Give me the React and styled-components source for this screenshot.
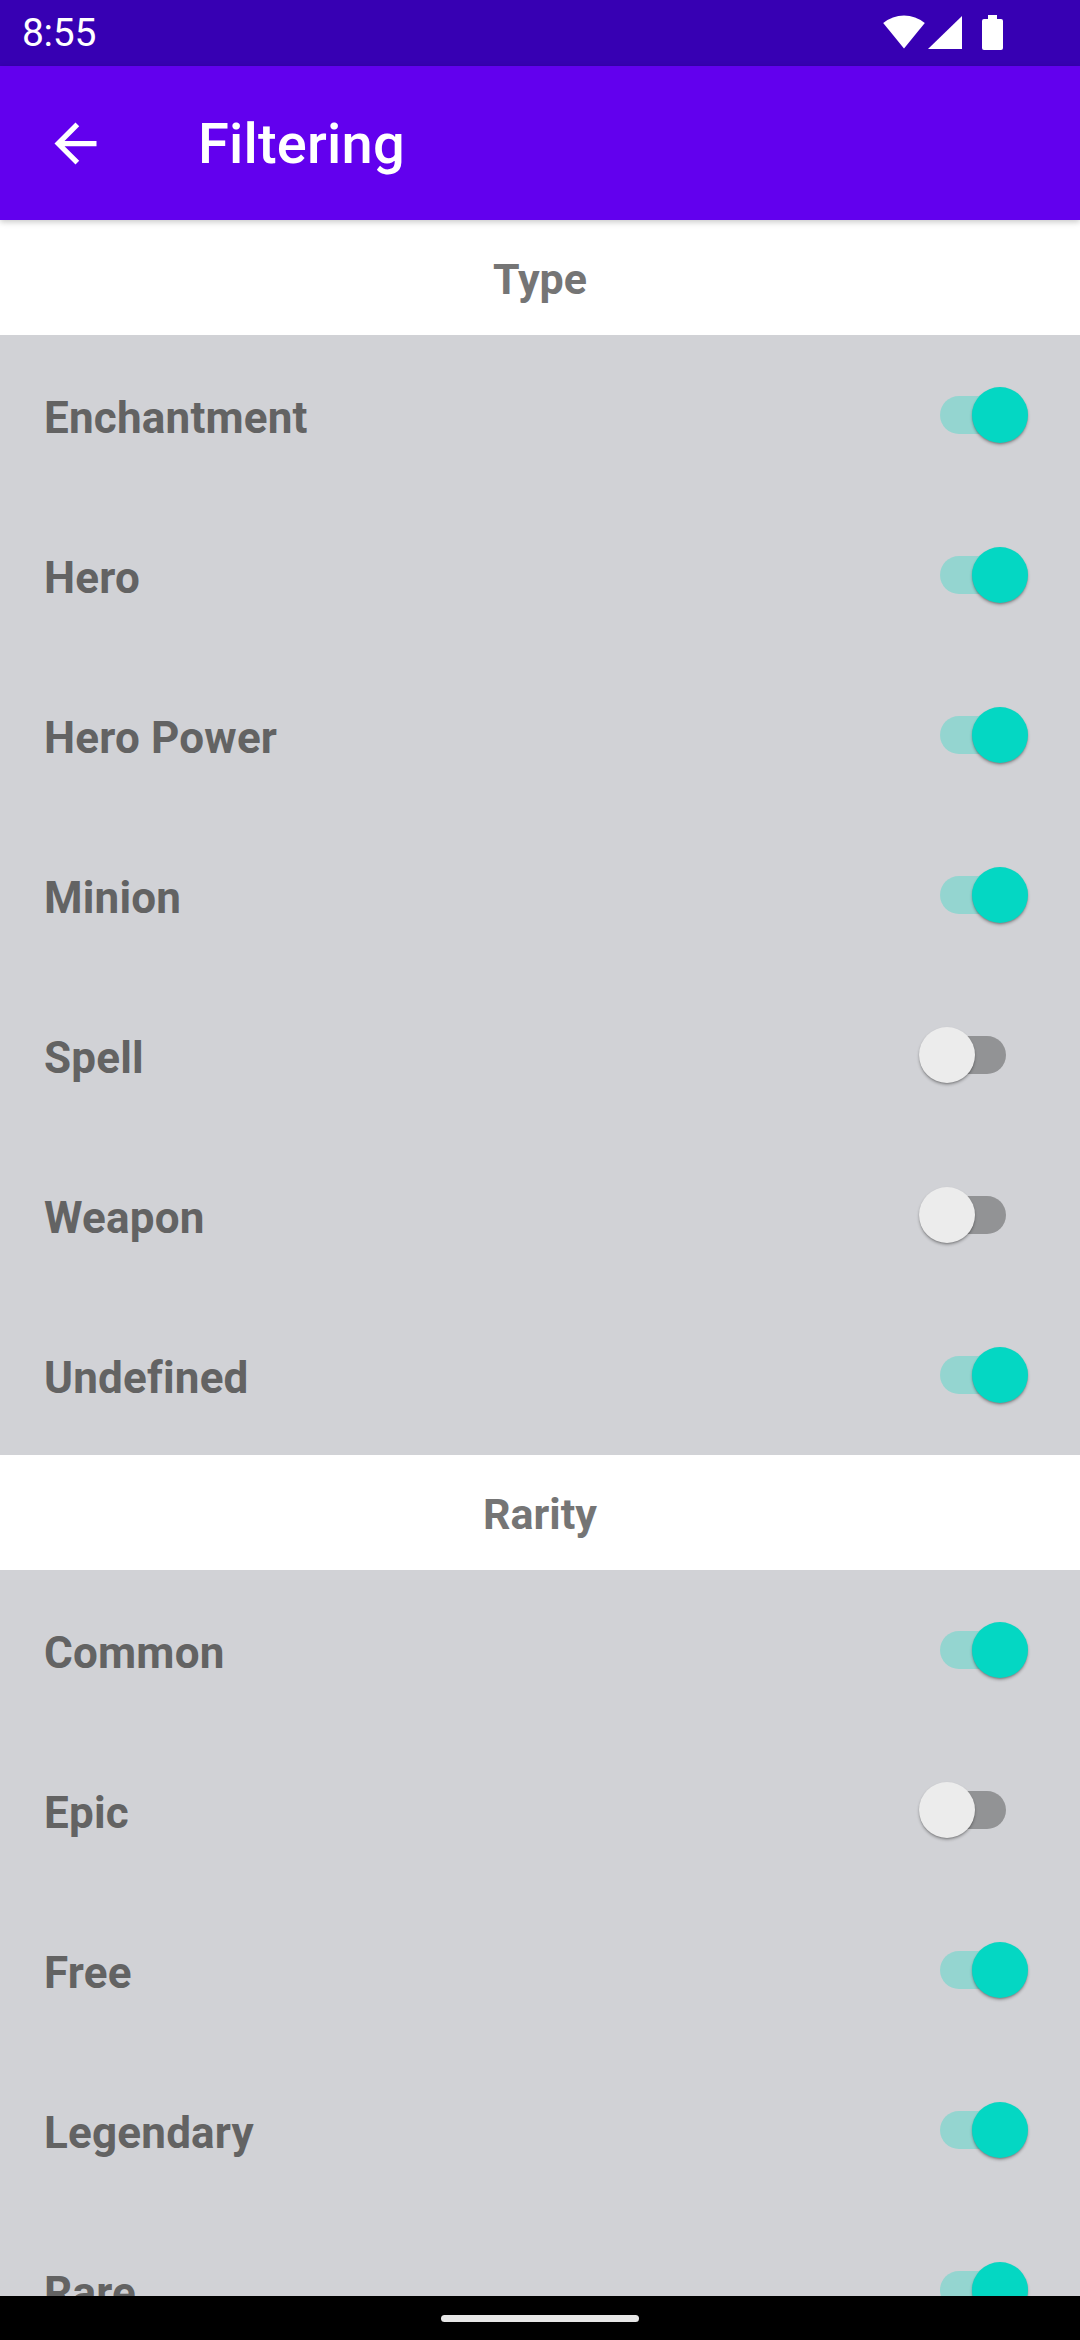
import React from "react";
import styled, { createGlobalStyle } from "styled-components";

const GlobalStyle = createGlobalStyle`
  html, body {
    margin: 0;
    padding: 0;
    background: #d1d2d6;
    font-family: Roboto, "Noto Sans", "Liberation Sans", sans-serif;
  }
  * { box-sizing: border-box; }
`;

const Screen = styled.div`
  width: 1080px;
  height: 2340px;
  display: flex;
  flex-direction: column;
  overflow: hidden;
  background: #d1d2d6;
`;

const StatusBar = styled.div`
  height: 66px;
  flex: 0 0 66px;
  background: #3700b3;
  display: flex;
  align-items: center;
  justify-content: space-between;
  padding: 0 77px 0 22px;
  color: #ffffff;
`;

const Clock = styled.span`
  font-size: 39px;
  font-weight: 400;
  letter-spacing: -0.3px;
`;

const AppBar = styled.header`
  height: 154px;
  flex: 0 0 154px;
  background: #6200ee;
  display: flex;
  align-items: center;
  padding-left: 44px;
  position: relative;
  z-index: 2;
  box-shadow: 0 2px 6px rgba(0, 0, 0, 0.22);
`;

const BackButton = styled.button`
  width: 63px;
  height: 63px;
  padding: 0;
  border: none;
  background: transparent;
  display: flex;
  align-items: center;
  justify-content: center;
  margin-right: 91px;
`;

const Title = styled.h1`
  margin: 2px 0 0;
  color: #ffffff;
  font-size: 56px;
  font-weight: 500;
  letter-spacing: 0.2px;
`;

const Content = styled.main`
  flex: 1 1 auto;
  overflow: hidden;
  display: flex;
  flex-direction: column;
`;

const SectionHeader = styled.div`
  height: 115px;
  flex: 0 0 115px;
  background: #ffffff;
  display: flex;
  align-items: center;
  justify-content: center;
  color: #757575;
  font-size: 43px;
  font-weight: 700;
  padding-top: 3px;
`;

const Row = styled.div`
  height: 160px;
  flex: 0 0 160px;
  display: flex;
  align-items: center;
  justify-content: space-between;
  padding: 0 52px 0 44px;
`;

const Label = styled.span`
  color: #636363;
  font-size: 44px;
  font-weight: 700;
  letter-spacing: 0.2px;
  margin-top: 5px;
`;

const SwitchBox = styled.div`
  position: relative;
  width: 109px;
  height: 56px;
  flex: 0 0 109px;
`;

const Track = styled.div`
  position: absolute;
  left: 21px;
  right: 22px;
  top: 9px;
  height: 38px;
  border-radius: 19px;
  background: ${(p) => (p.$on ? "#94d5d0" : "#929395")};
`;

const Thumb = styled.div`
  position: absolute;
  top: 0;
  left: ${(p) => (p.$on ? "53px" : "0px")};
  width: 56px;
  height: 56px;
  border-radius: 50%;
  background: ${(p) => (p.$on ? "#04d7c3" : "#ececec")};
  box-shadow: 0 2px 3px rgba(0, 0, 0, 0.28), 0 1px 1px rgba(0, 0, 0, 0.12);
`;

const NavBar = styled.div`
  height: 44px;
  flex: 0 0 44px;
  background: #000000;
  display: flex;
  align-items: center;
  justify-content: center;
`;

const Handle = styled.div`
  width: 198px;
  height: 7px;
  border-radius: 4px;
  background: #e6e6e6;
`;

const Toggle = ({ on }) => (
  <SwitchBox>
    <Track $on={on} />
    <Thumb $on={on} />
  </SwitchBox>
);

const StatusIcons = () => (
  <svg width="120" height="38" viewBox="0 0 120 38">
    <path d="M20.5 35 L-0.3 9.4 A33 33 0 0 1 41.3 9.4 Z" fill="#ffffff" transform="translate(0.5,-0.5)" />
    <polygon points="79,2 79,35 45,35" fill="#ffffff" />
    <rect x="105" y="1" width="9" height="5" fill="#ffffff" />
    <rect x="99" y="5" width="21" height="31" rx="2" fill="#ffffff" />
  </svg>
);

const types = [
  ["Enchantment", true],
  ["Hero", true],
  ["Hero Power", true],
  ["Minion", true],
  ["Spell", false],
  ["Weapon", false],
  ["Undefined", true],
];

const rarities = [
  ["Common", true],
  ["Epic", false],
  ["Free", true],
  ["Legendary", true],
  ["Rare", true],
];

export default function App() {
  return (
    <>
      <GlobalStyle />
      <Screen>
        <StatusBar>
          <Clock>8:55</Clock>
          <StatusIcons />
        </StatusBar>
        <AppBar>
          <BackButton aria-label="Back">
            <svg width="63" height="63" viewBox="0 0 24 24">
              <path
                d="M20 11H7.83l5.59-5.59L12 4l-8 8 8 8 1.41-1.41L7.83 13H20v-2z"
                fill="#ffffff"
              />
            </svg>
          </BackButton>
          <Title>Filtering</Title>
        </AppBar>
        <Content>
          <SectionHeader>Type</SectionHeader>
          {types.map(([name, on]) => (
            <Row key={name}>
              <Label>{name}</Label>
              <Toggle on={on} />
            </Row>
          ))}
          <SectionHeader>Rarity</SectionHeader>
          {rarities.map(([name, on]) => (
            <Row key={name}>
              <Label>{name}</Label>
              <Toggle on={on} />
            </Row>
          ))}
        </Content>
        <NavBar>
          <Handle />
        </NavBar>
      </Screen>
    </>
  );
}
